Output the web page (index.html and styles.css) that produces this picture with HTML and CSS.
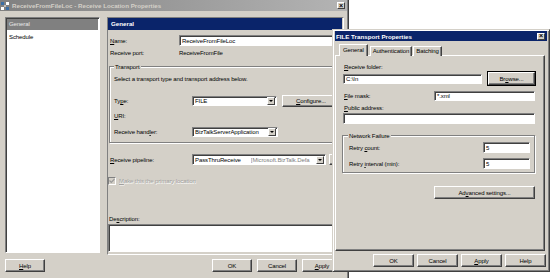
FILE: index.html
```html
<!DOCTYPE html>
<html>
<head>
<meta charset="utf-8">
<link rel="stylesheet" href="styles.css">
</head>
<body>
<div class="desk">
  <div class="win main">
    <div class="title inactive">
      <svg class="appicon" width="8" height="8" viewBox="0 0 8 8"><rect x="0" y="0" width="3" height="3" fill="#3a6ea5"/><rect x="5" y="0" width="3" height="3" fill="#fff"/><rect x="0" y="5" width="3" height="3" fill="#fff"/><rect x="5" y="5" width="3" height="3" fill="#3a6ea5"/><rect x="3" y="3" width="2" height="2" fill="#c0c0c0"/></svg>
      <span class="ttext">ReceiveFromFileLoc - Receive Location Properties</span>
      <span class="xbtn">×</span>
    </div>
    <div class="mbody">
      <div class="list">
        <div class="li sel">General</div>
        <div class="li">Schedule</div>
      </div>
      <div class="panel">
        <div class="phead">General</div>
        <div class="row r-name"><span class="lbl w69"><u>N</u>ame:</span><div class="field grow">ReceiveFromFileLoc</div></div>
        <div class="row r-port"><span class="lbl w69">Receive port:</span><span>ReceiveFromFile</span></div>
        <div class="group g-transport">
          <span class="legend">Transport</span>
          <div class="gtext">Select a transport type and transport address below.</div>
          <div class="row r-type"><span class="lbl w78">Ty<u>p</u>e:</span><div class="field combo c86"><span class="ctext">FILE</span><span class="arrow"></span></div><div class="btn b-config"><span><u>C</u>onfigure...</span></div></div>
          <div class="row r-uri"><span class="lbl"><u>U</u>RI:</span></div>
          <div class="row r-handler"><span class="lbl w78">Receive hand<u>l</u>er:</span><div class="field combo c86"><span class="ctext">BizTalkServerApplication</span><span class="arrow"></span></div></div>
        </div>
        <div class="row r-pipe"><span class="lbl w82"><u>R</u>eceive pipeline:</span><div class="field combo c134"><span class="ctext">PassThruReceive</span><span class="ctext dim">[Microsoft.BizTalk.Defa</span><span class="arrow"></span></div><div class="btn b-small"></div></div>
        <div class="row r-check"><span class="chk"><svg width="6" height="6" viewBox="0 0 6 6"><path d="M0.5 2.5 L2.3 4.3 L5.5 1" stroke="#9a9a9a" stroke-width="1.2" fill="none"/></svg></span><span class="disabled"><u>M</u>ake this the primary location</span></div>
        <div class="row r-desc"><span class="lbl">De<u>s</u>cription:</span></div>
        <div class="field tarea"></div>
      </div>
    </div>
    <div class="mfoot">
      <div class="btn b40"><span><u>H</u>elp</span></div>
      <div class="bgroup">
        <div class="btn b40"><span>OK</span></div>
        <div class="btn b40"><span>Cancel</span></div>
        <div class="btn b40"><span><u>A</u>pply</span></div>
      </div>
    </div>
  </div>

  <div class="win file">
    <div class="title active">
      <span class="ttext">FILE Transport Properties</span>
      <span class="xbtn">×</span>
    </div>
    <div class="tabs">
      <div class="tab on">General</div>
      <div class="tab">Authentication</div>
      <div class="tab">Batching</div>
    </div>
    <div class="tabpanel">
      <div class="flbl l-folder"><u>R</u>eceive folder:</div>
      <div class="frow r-folder"><div class="field f-folder">C:\In</div><div class="btn default b-browse"><span>Br<u>o</u>wse...</span></div></div>
      <div class="frow r-mask"><span class="flbl w91"><u>F</u>ile mask:</span><div class="field fgrow">*.xml</div></div>
      <div class="flbl l-public"><u>P</u>ublic address:</div>
      <div class="field f-public"></div>
      <div class="group g-net">
        <span class="legend">Network Failure</span>
        <div class="frow r-retry1"><span class="flbl fgrow">Retry <u>c</u>ount:</span><div class="field f-num">5</div></div>
        <div class="frow r-retry2"><span class="flbl fgrow">Retry <u>i</u>nterval (min):</span><div class="field f-num">5</div></div>
      </div>
      <div class="btn b-adv"><span>Ad<u>v</u>anced settings...</span></div>
    </div>
    <div class="ffoot">
      <div class="btn b41"><span>OK</span></div>
      <div class="btn b41"><span>Cancel</span></div>
      <div class="btn b41"><span><u>A</u>pply</span></div>
      <div class="btn b41"><span>Help</span></div>
    </div>
  </div>
</div>
</body>
</html>
```

FILE: styles.css
```css
* { box-sizing: border-box; }
html, body { margin: 0; padding: 0; background: #fff; }
body {
  font-family: "Liberation Sans", Arial, sans-serif;
  font-size: 6px;
  letter-spacing: -0.1px;
  color: #000;
}
u { text-decoration-thickness: 0.5px; text-underline-offset: 0.5px; }

.desk { position: relative; width: 550px; height: 278px; overflow: hidden; background: #fff; }

.win { position: absolute; background: #d4d0c8; }

/* ---------- main window ---------- */
.main {
  left: 0; top: 0; width: 349px; height: 280px;
  border-right: 1px solid #404040;
  box-shadow: inset -1px 0 0 #808080;
  display: flex; flex-direction: column;
}
.title {
  display: flex; align-items: center;
  height: 11px; padding-left: 1px; padding-right: 2px;
  font-weight: bold; font-size: 6.2px; letter-spacing: 0;
}
.title.inactive { background: linear-gradient(to right, #808080, #b4b4b4); color: #d4d0c8; margin-right: 1px; }
.title.active { background: #0a246a; color: #fff; height: 10px; }
.appicon { margin-right: 3px; flex: none; }
.ttext { flex: 1; white-space: nowrap; }
.xbtn {
  width: 8px; height: 7px; flex: none;
  background: #d4d0c8; color: #000;
  border: 1px solid; border-color: #fff #404040 #404040 #fff;
  font-size: 7px; line-height: 4px; text-align: center; font-weight: bold;
  display: flex; align-items: center; justify-content: center;
}

.mbody { display: flex; gap: 7px; padding: 6px 0 0 5px; }
.list {
  width: 95px; height: 236px; background: #fff;
  border: 1px solid; border-color: #808080 #fff #fff #808080;
  box-shadow: inset 1px 1px 0 #404040;
  padding: 1px 1px 0 1px;
}
.li { height: 11px; line-height: 11px; padding-left: 2px; }
.li.sel { background: #808080; color: #e8e8e8; }
.li + .li { margin-top: 2px; }

.panel {
  width: 237px; height: 238px;
  border: 1px solid; border-color: #808080 #fff #fff #808080;
  display: flex; flex-direction: column;
}
.phead {
  height: 12px; line-height: 12px; background: #0a246a; color: #fff;
  font-weight: bold; font-size: 6.2px; letter-spacing: 0; padding-left: 3px; margin-right: 1px;
  flex: none;
}
.row { display: flex; align-items: center; flex: none; }
.lbl { white-space: nowrap; flex: none; }
.w69 { width: 69px; }
.w78 { width: 78px; }
.w82 { width: 82px; }
.grow { flex: 1; }

.r-name { margin-top: 5px; height: 11px; padding-left: 2px; padding-right: 1px; }
.r-port { height: 13px; padding-left: 2px; }

.field {
  background: #fff; height: 11px;
  border: 1px solid; border-color: #808080 #fff #fff #808080;
  box-shadow: inset 1px 1px 0 #404040;
  padding-left: 2px; display: flex; align-items: center; white-space: nowrap; overflow: hidden;
}
.combo { padding-right: 1px; }
.ctext { flex: none; }
.ctext.dim { color: #808080; margin-left: 10px; flex: 1; overflow: hidden; }
.arrow {
  margin-left: auto; flex: none;
  width: 8px; height: 8px; background: #d4d0c8;
  border: 1px solid; border-color: #fff #404040 #404040 #fff;
  position: relative;
}
.arrow::after {
  content: ""; position: absolute; left: 1px; top: 2px;
  border-left: 2px solid transparent; border-right: 2px solid transparent; border-top: 2px solid #000;
}
.c86 { width: 86px; height: 10px; }
.c134 { width: 134px; height: 11px; }

.btn {
  background: #d4d0c8; height: 13px;
  border: 1px solid; border-color: #fff #404040 #404040 #fff;
  box-shadow: inset -1px -1px 0 #808080;
  display: flex; align-items: center; justify-content: center; white-space: nowrap; flex: none;
}
.btn.default { outline: 1px solid #000; }

.group {
  border: 1px solid #808080;
  box-shadow: inset 1px 1px 0 #fff, 1px 1px 0 #fff;
  display: flex; flex-direction: column; flex: none;
}
.legend {
  align-self: flex-start; background: #d4d0c8; padding: 0 1px; margin-top: -4px; height: 8px; line-height: 8px;
}
.g-transport { margin: 7px 2px 0 1px; height: 77px; padding-left: 4px; }
.gtext { margin-top: 4px; height: 8px; line-height: 8px; }
.r-type { margin-top: 12px; height: 12px; }
.b-config { width: 58px; height: 12px; margin-left: 5px; }
.r-uri { margin-top: 5px; height: 8px; }
.r-handler { margin-top: 6px; height: 11px; }

.r-pipe { margin-top: 11px; height: 11px; padding-left: 2px; }
.b-small { width: 12px; height: 11px; margin-left: 3px; }
.r-check { margin-top: 12px; height: 8px; }
.chk {
  width: 8px; height: 8px; background: #d4d0c8; flex: none;
  border: 1px solid; border-color: #808080 #fff #fff #808080;
  display: flex; align-items: center; justify-content: center; margin-right: 3px;
}
.disabled { color: #a0a0a0; text-shadow: 0.5px 0.5px 0 #fff; }
.r-desc { margin-top: 30px; height: 8px; padding-left: 1px; }
.tarea { margin-top: 1px; height: 28px; margin-right: 0; }

.mfoot { display: flex; justify-content: space-between; padding: 4px 6px 0 5px; }
.bgroup { display: flex; gap: 5px; }
.b40 { width: 40px; }
.b41 { width: 41px; }

/* ---------- FILE dialog ---------- */
.file {
  left: 332px; top: 29px; width: 218px; height: 243px;
  border: 1px solid; border-color: #d4d0c8 #404040 #404040 #d4d0c8;
  box-shadow: inset 1px 1px 0 #fff, inset -1px -1px 0 #808080;
  padding: 1px 2px 0 2px;
  display: flex; flex-direction: column;
}
.tabs { display: flex; align-items: flex-end; margin-top: 3px; padding-left: 4px; height: 12px; position: relative; z-index: 1; margin-bottom: -1px; }
.tab {
  height: 10px; padding: 0 2px; line-height: 9px;
  border: 1px solid; border-bottom: none; border-color: #fff #404040 transparent #fff;
  box-shadow: inset -1px 0 0 #808080;
  background: #d4d0c8; margin-left: 1px;
}
.tab.on { height: 12px; margin-left: 0; padding: 0 3px; margin-right: 1px; line-height: 11px; }
.tabpanel {
  margin-left: 0; width: 210px; height: 196px;
  border: 1px solid; border-color: #fff #404040 #404040 #fff;
  box-shadow: inset -1px -1px 0 #808080;
  padding: 0 9px 0 7px;
  display: flex; flex-direction: column;
}
.flbl { white-space: nowrap; height: 8px; line-height: 8px; padding-left: 1px; flex: none; }
.frow .fgrow { flex: 1 1 auto; }
.w91 { width: 91px; }
.frow { display: flex; align-items: center; flex: none; }
.l-folder { margin-top: 7px; }
.r-folder { margin-top: 1px; height: 13px; }
.f-folder { width: 139px; height: 10px; }
.b-browse { width: 47px; height: 13px; margin-left: auto; }
.r-mask { margin-top: 6px; height: 10px; }
.r-mask .field { height: 10px; }
.l-public { margin-top: 3px; }
.f-public { margin-top: 1px; height: 11px; }
.g-net { margin: 11px 0 0 -1px; height: 38px; padding: 0 4px 0 5px; }
.r-retry1 { margin-top: 2px; height: 11px; }
.r-retry2 { margin-top: 5px; height: 11px; }
.f-num { width: 47px; height: 11px; flex: none; }
.b-adv { width: 101px; height: 13px; margin-top: 13px; margin-left: auto; }
.ffoot { display: flex; justify-content: flex-end; gap: 3px; margin-top: 3px; padding-right: 1px; }
```
